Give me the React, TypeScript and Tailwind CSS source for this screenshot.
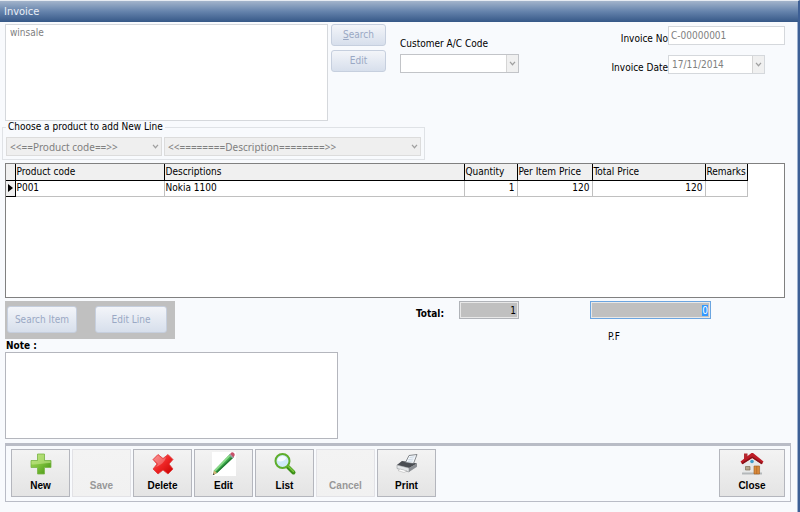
import React, { useEffect, useRef } from "react";

const columns = [
  { title: "Product code", value: "P001", width: "w-[149px]", align: "text-left" },
  { title: "Descriptions", value: "Nokia 1100", width: "w-[300px]", align: "text-left" },
  { title: "Quantity", value: "1", width: "w-[53px]", align: "text-right" },
  { title: "Per Item Price", value: "120", width: "w-[75px]", align: "text-right" },
  { title: "Total Price", value: "120", width: "w-[113px]", align: "text-right" },
  { title: "Remarks", value: "", width: "w-[42px]", align: "text-left" },
];

const PlusIcon = () => (
  <svg viewBox="0 0 24 24" className="size-6">
    <defs>
      <linearGradient id="plus" x1="0" y1="0" x2="1" y2="1">
        <stop offset="0" stopColor="#a8d860" />
        <stop offset="0.5" stopColor="#7cc03a" />
        <stop offset="1" stopColor="#3f8f10" />
      </linearGradient>
    </defs>
    <path d="M8.500 2h7v6.500H22v7h-6.500V22h-7v-6.500H2v-7h6.500z" fill="url(#plus)" stroke="#7ab548" strokeWidth="0.8" />
    <path d="M9 2.500h6v6.500h6.500v2c-7 0-12 2-19 1.500V9H9z" fill="#d4f09c" opacity="0.5" />
  </svg>
);

const CrossIcon = () => (
  <svg viewBox="0 0 24 24" className="size-6">
    <defs>
      <linearGradient id="cross" x1="0" y1="0" x2="1" y2="1">
        <stop offset="0" stopColor="#f87070" />
        <stop offset="0.5" stopColor="#ee2525" />
        <stop offset="1" stopColor="#c80000" />
      </linearGradient>
    </defs>
    <path
      d="M7 2.500l5 4 5-4 5 5-4 4.500 4 5-5 5-5-4-5 4-5-5 4-5-4-4.500z"
      fill="url(#cross)"
      stroke="#e03a3a"
      strokeWidth="0.8"
    />
    <path d="M7 3.200l5 4 3-2.300c-1 5-5 8-10 10l2-3L2.800 7.500z" fill="#fff" opacity="0.25" />
  </svg>
);

const PencilIcon = () => (
  <svg viewBox="0 0 24 24" className="size-6">
    <path d="M0 0h24v24H0z" fill="#fff" />
    <path d="M1 23l1-4.500L18 2l3.500 3.500L5 21z" fill="#3cab4a" />
    <path d="M2 18.500L18 2l1.200 1.200L3.200 19.700z" fill="#8ddb8c" />
    <path d="M5 21L21.500 5.500l-1-1L4 20z" fill="#237a35" />
    <path d="M18 2l1.500-1.500c1.500-1 4 1.500 3 3L21.500 5.500z" fill="#c8506a" />
    <path d="M17 3l1-1 3.500 3.500-1 1z" fill="#9aa0a8" />
    <path d="M.7 23.300L2 18.500 5 21z" fill="#d8b27a" />
    <path d="M.7 23.300l.6-2.100 1.300 1.200z" fill="#444" />
  </svg>
);

const MagnifierIcon = () => (
  <svg viewBox="0 0 24 24" className="size-6">
    <path d="M14.500 14.500l6 6" stroke="#3d8f18" strokeWidth="4" strokeLinecap="round" />
    <path d="M15.500 14.500l5 5" stroke="#79c83c" strokeWidth="1.500" strokeLinecap="round" />
    <circle cx="9.500" cy="9" r="7" fill="#cfeafa" stroke="#5fae2c" strokeWidth="2" />
    <path d="M4.500 9a5 5 0 0 1 9-3c-2 3-5 4-9 3z" fill="#fff" opacity="0.8" />
  </svg>
);

const PrinterIcon = () => (
  <svg viewBox="0 0 24 24" className="size-6">
    <path d="M2 13l5-4 15 2.500v3.500L13 20 2 16z" fill="#b8bbbe" />
    <path d="M2 13l5-4 15 2.500-8 4.500z" fill="#4a4d52" />
    <path d="M2 13l12 3v4L2 16.500z" fill="#e4e6e8" stroke="#85888c" strokeWidth="0.5" />
    <path d="M14 16l8-4.500v3L14 20z" fill="#8b8e93" />
    <path d="M10.500 10.500L14 3.500l8-1-3.500 9z" fill="#f6f9fc" stroke="#555a60" strokeWidth="0.7" />
    <path d="M14.500 5.500l5-.7M13.500 7.500l5-.5M12.700 9.300l5-.3" stroke="#a9bed2" strokeWidth="0.6" />
    <path d="M5 17l7 2-3 1.500-6-2z" fill="#fff" stroke="#999" strokeWidth="0.4" />
  </svg>
);

const HouseIcon = () => (
  <svg viewBox="0 0 24 24" className="size-6">
    <path d="M3 11l9-6.500L21 11v11H3z" fill="#e6e8e8" />
    <path d="M2 20.500h20v2H2z" fill="#b4b8ba" />
    <path d="M4 1.500h3.500v5L4 9z" fill="#b32a30" />
    <path d="M.5 9.500L11.500 1h1.500L23.500 9.500l-1.800 2.800L12.200 6 2.400 12.300z" fill="#bd1c26" />
    <path d="M.5 9.500l1.900 2.800L12.200 6l9.500 6.300.9-1.400L12.200 4.500 1.500 11z" fill="#861218" />
    <circle cx="12" cy="9.500" r="1.800" fill="#3f9dcc" />
    <path d="M5.500 14.500h4.500v3.500H5.500z" fill="#b6a78d" stroke="#806e56" strokeWidth="0.7" />
    <path d="M14 14h5.500v8H14z" fill="#d98a3c" stroke="#a05a1e" strokeWidth="0.6" />
    <path d="M16.700 14v8" stroke="#a05a1e" strokeWidth="0.5" />
  </svg>
);

const actions = [
  { label: "New", icon: <PlusIcon /> },
  { label: "Save" },
  { label: "Delete", icon: <CrossIcon /> },
  { label: "Edit", icon: <PencilIcon /> },
  { label: "List", icon: <MagnifierIcon /> },
  { label: "Cancel" },
  { label: "Print", icon: <PrinterIcon /> },
];

type ToolButtonProps = {
  label: string;
  icon?: React.ReactNode;
  width?: string;
};

const ToolButton = ({ label, icon, width = "w-[59px]" }: ToolButtonProps) => (
  <button
    disabled={!icon}
    className={`${width} h-12 shrink-0 flex flex-col items-center justify-end gap-1 pb-1 border border-[#b4b6bd] bg-linear-to-b from-[#f3f3f3] to-[#e4e4e4] font-['Liberation_Sans',sans-serif] font-bold text-[10px] leading-3 disabled:border-[#e2e2e6] disabled:from-[#f3f3f3] disabled:to-[#f1f1f1] disabled:text-[#989898]`}
  >
    {icon}
    {label}
  </button>
);

const SoftButton = ({ size, children }: { size: string; children: React.ReactNode }) => (
  <button
    disabled
    className={`${size} rounded-[3px] border border-[#c6cfde] bg-linear-to-b from-[#f3f5f9] to-[#d7dfec] text-[#9aa8c4]`}
  >
    {children}
  </button>
);

type ComboProps = {
  id?: string;
  label?: string;
  text: string;
  size: string;
  look: string;
  arrow?: string;
};

const Combo = ({ id, label, text, size, look, arrow = "" }: ComboProps) => (
  <div className={`relative h-[19px] ${size}`}>
    <select
      id={id}
      aria-label={label}
      disabled
      className={`block appearance-none w-full h-full pl-[3px] border text-[#808080] opacity-100 ${look}`}
    >
      <option>{text}</option>
    </select>
    <span
      className={`absolute right-px inset-y-px w-3 flex items-center justify-center pointer-events-none ${arrow}`}
    >
      <svg viewBox="0 0 8 6" className="w-[7px] h-[5px]">
        <path d="M1 1l3 3.500L7 1" fill="none" stroke="#a0a0a0" strokeWidth="1.500" />
      </svg>
    </span>
  </div>
);

const App = () => {
  const totalRef = useRef<HTMLInputElement>(null);

  useEffect(() => {
    totalRef.current?.focus();
    totalRef.current?.select();
  }, []);

  return (
    <div className="min-h-screen flex flex-col bg-[#f8fafd] border-t border-t-[#e6ebf2] border-r-2 border-r-[#3d5f95] font-['DejaVu_Sans_Condensed','DejaVu_Sans',sans-serif] text-[10px] leading-3 text-black">
      <h1 className="h-[21px] px-1 shrink-0 bg-linear-to-b from-[#a3b4cb] via-[#6583ac] to-[#365887] text-[#e9eef6] text-[11px] leading-[21px]">
        Invoice
      </h1>

      <main className="flex-1 pl-[5px] pr-1.5 pt-0.5 border-r border-r-[#9fb3d1]">
        <div className="flex items-start pr-1.5">
          <textarea
            aria-label="Customer"
            disabled
            defaultValue="winsale"
            className="w-[323px] h-[97px] px-1 py-0.5 resize-none border border-[#d5d8dc] bg-white text-[#808080]"
          />
          <div className="flex flex-col gap-1 ml-[3px]">
            <SoftButton size="w-[55px] h-[22px]">
              <u>S</u>earch
            </SoftButton>
            <SoftButton size="w-[55px] h-[22px]">Edit</SoftButton>
          </div>
          <div className="ml-3.5 pt-3.5">
            <label htmlFor="customer" className="block mb-1">
              Customer A/C Code
            </label>
            <Combo
              id="customer"
              text=""
              size="w-[119px]"
              look="border-[#c2c4c8] bg-white"
              arrow="border-l border-[#d5d5d5] bg-[#f0f0f0]"
            />
          </div>
          <div className="ml-auto pt-0.5 grid grid-cols-[auto_117px] gap-y-2.5">
            <label htmlFor="invoice-no" className="pt-[7px] text-right">
              Invoice No
            </label>
            <input
              id="invoice-no"
              disabled
              defaultValue="C-00000001"
              className="h-[19px] w-full px-0.5 border border-[#d5d8dc] bg-white text-[#808080]"
            />
            <label htmlFor="invoice-date" className="pt-[7px] text-right">
              Invoice Date
            </label>
            <Combo
              id="invoice-date"
              text="17/11/2014"
              size="w-[97px]"
              look="border-[#d5d8dc] bg-white"
              arrow="border-l border-[#d5d5d5] bg-[#f0f0f0]"
            />
          </div>
        </div>

        <fieldset className="w-[423px] -ml-[3px] h-[39px] px-[3px] border border-[#dfe2e6]">
          <legend className="px-0.5">Choose a product to add New Line</legend>
          <div className="flex gap-0.5 pt-1 font-['Noto_Sans',sans-serif]">
            <Combo label="Product code" text="<<==Product code==>>" size="w-[156px]" look="border-[#dcdcdc] bg-[#efefef]" />
            <Combo
              label="Description"
              text="<<========Description========>>"
              size="flex-1"
              look="border-[#dcdcdc] bg-[#efefef]"
            />
          </div>
        </fieldset>

        <div className="mt-[3px] mr-1.5 h-[135px] border border-[#808080] bg-white overflow-hidden">
          <table className="table-fixed w-[741px] border-collapse">
            <thead>
              <tr className="h-4 bg-[#f0f0f0]">
                <th className="w-[9px] border-r border-b border-black" />
                {columns.map((column) => (
                  <th
                    key={column.title}
                    className={`${column.width} p-0 pl-px text-left font-normal whitespace-nowrap border-r border-b border-black`}
                  >
                    {column.title}
                  </th>
                ))}
              </tr>
            </thead>
            <tbody>
              <tr className="h-4">
                <td className="p-0 bg-[#f0f0f0] border-r border-b border-black">
                  <svg viewBox="0 0 5 8" className="w-[5px] h-2 ml-0.5">
                    <path d="M0 0l5 4-5 4z" />
                  </svg>
                </td>
                {columns.map((column) => (
                  <td key={column.title} className={`${column.align} p-0 pl-px pr-0.5 border-r border-b border-[#c0c0c0]`}>
                    {column.value}
                  </td>
                ))}
              </tr>
            </tbody>
          </table>
        </div>

        <div className="flex items-start mt-[3px]">
          <div className="w-[170px] h-[38px] flex items-start justify-between pt-[5px] pl-0.5 pr-2 bg-[#c0c0c0]">
            <SoftButton size="w-[70px] h-[27px]">Search Item</SoftButton>
            <SoftButton size="w-[72px] h-[27px]">Edit Line</SoftButton>
          </div>
          <label htmlFor="total-quantity" className="ml-[241px] mt-[7px] w-[43px] font-bold">
            Total:
          </label>
          <input
            id="total-quantity"
            readOnly
            value="1"
            className="w-[60px] h-[18px] px-0.5 text-right border border-[#b0b3b8] bg-[#c0c0c0] inset-ring inset-ring-[#e8e8e8]"
          />
          <div className="ml-[71px] -mb-2">
            <input
              ref={totalRef}
              aria-label="Total price"
              readOnly
              value="0"
              className="block w-[121px] h-[18px] px-0.5 text-right border border-[#6ba5e0] bg-[#c0c0c0] inset-ring inset-ring-[#e8e8e8] outline-none selection:bg-[#3399ff] selection:text-white"
            />
            <p className="mt-3 pl-[18px]">P.F</p>
          </div>
        </div>

        <label htmlFor="note" className="block mt-px pl-px font-bold">
          Note :
        </label>
        <textarea id="note" className="block w-[333px] h-[87px] resize-none border border-[#b4b6bd] bg-white" />

        <div className="mt-1 h-[59px] px-[5px] pt-[3px] flex gap-0.5 border border-t-[3px] border-[#b9bcc6]">
          {actions.map((action) => (
            <ToolButton key={action.label} {...action} />
          ))}
          <div className="ml-auto">
            <ToolButton label="Close" icon={<HouseIcon />} width="w-[66px]" />
          </div>
        </div>
      </main>
    </div>
  );
};

export default App;
